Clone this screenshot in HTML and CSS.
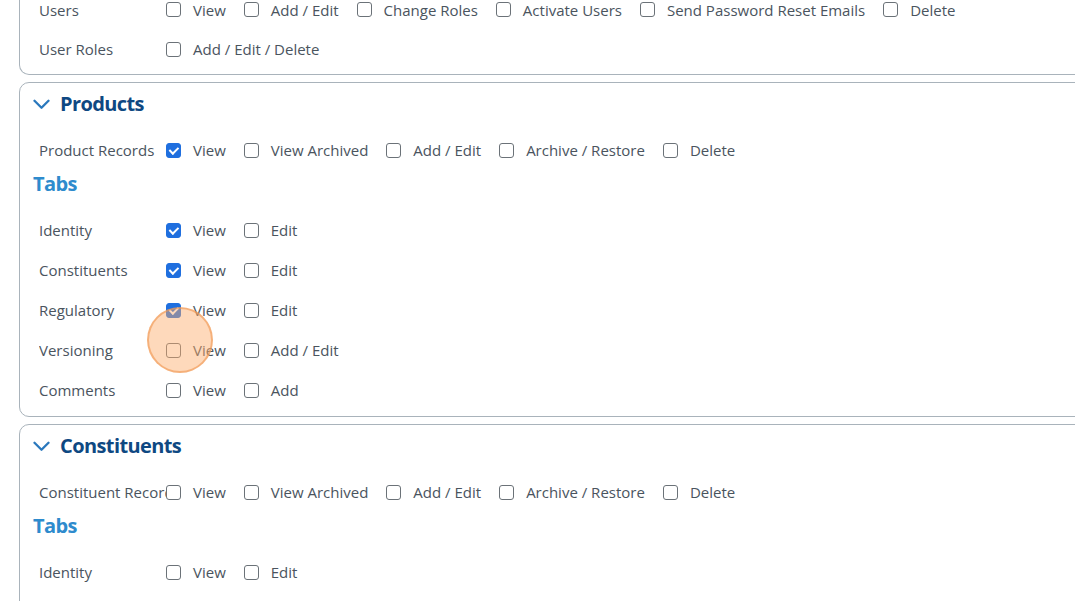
FILE: index.html
```html
<!DOCTYPE html>
<html>
<head>
<meta charset="utf-8">
<link rel="stylesheet" href="styles.css">
</head>
<body>
<div class="page">
  <section class="card card-top">
    <div class="row">
      <div class="label">Users</div>
      <div class="opt"><span class="cb"></span><span>View</span></div>
      <div class="opt"><span class="cb"></span><span>Add / Edit</span></div>
      <div class="opt"><span class="cb"></span><span>Change Roles</span></div>
      <div class="opt"><span class="cb"></span><span>Activate Users</span></div>
      <div class="opt"><span class="cb"></span><span>Send Password Reset Emails</span></div>
      <div class="opt"><span class="cb"></span><span>Delete</span></div>
    </div>
    <div class="row">
      <div class="label">User Roles</div>
      <div class="opt"><span class="cb"></span><span>Add / Edit / Delete</span></div>
    </div>
  </section>

  <section class="card">
    <h2 class="head"><svg class="chev" width="17" height="11" viewBox="0 0 17 11"><path d="M1.5 1.8 L8.5 8.8 L15.5 1.8" fill="none" stroke="#2a78bd" stroke-width="2.3" stroke-linecap="round" stroke-linejoin="round"/></svg><span>Products</span></h2>
    <div class="row">
      <div class="label">Product Records</div>
      <div class="opt"><span class="cb on"></span><span>View</span></div>
      <div class="opt"><span class="cb"></span><span>View Archived</span></div>
      <div class="opt"><span class="cb"></span><span>Add / Edit</span></div>
      <div class="opt"><span class="cb"></span><span>Archive / Restore</span></div>
      <div class="opt"><span class="cb"></span><span>Delete</span></div>
    </div>
    <h3 class="tabs">Tabs</h3>
    <div class="row">
      <div class="label">Identity</div>
      <div class="opt"><span class="cb on"></span><span>View</span></div>
      <div class="opt"><span class="cb"></span><span>Edit</span></div>
    </div>
    <div class="row">
      <div class="label">Constituents</div>
      <div class="opt"><span class="cb on"></span><span>View</span></div>
      <div class="opt"><span class="cb"></span><span>Edit</span></div>
    </div>
    <div class="row">
      <div class="label">Regulatory</div>
      <div class="opt"><span class="cb on"></span><span>View</span></div>
      <div class="opt"><span class="cb"></span><span>Edit</span></div>
    </div>
    <div class="row">
      <div class="label">Versioning</div>
      <div class="opt"><span class="cb"></span><span>View</span></div>
      <div class="opt"><span class="cb"></span><span>Add / Edit</span></div>
    </div>
    <div class="row">
      <div class="label">Comments</div>
      <div class="opt"><span class="cb"></span><span>View</span></div>
      <div class="opt"><span class="cb"></span><span>Add</span></div>
    </div>
  </section>

  <section class="card">
    <h2 class="head"><svg class="chev" width="17" height="11" viewBox="0 0 17 11"><path d="M1.5 1.8 L8.5 8.8 L15.5 1.8" fill="none" stroke="#2a78bd" stroke-width="2.3" stroke-linecap="round" stroke-linejoin="round"/></svg><span>Constituents</span></h2>
    <div class="row">
      <div class="label">Constituent Records</div>
      <div class="opt"><span class="cb"></span><span>View</span></div>
      <div class="opt"><span class="cb"></span><span>View Archived</span></div>
      <div class="opt"><span class="cb"></span><span>Add / Edit</span></div>
      <div class="opt"><span class="cb"></span><span>Archive / Restore</span></div>
      <div class="opt"><span class="cb"></span><span>Delete</span></div>
    </div>
    <h3 class="tabs">Tabs</h3>
    <div class="row">
      <div class="label">Identity</div>
      <div class="opt"><span class="cb"></span><span>View</span></div>
      <div class="opt"><span class="cb"></span><span>Edit</span></div>
    </div>
    <div class="row">
      <div class="label">Constituents</div>
      <div class="opt"><span class="cb"></span><span>View</span></div>
      <div class="opt"><span class="cb"></span><span>Edit</span></div>
    </div>
  </section>

  <div class="click"></div>
</div>
</body>
</html>
```

FILE: styles.css
```css
html, body {
  margin: 0;
  padding: 0;
  background: #ffffff;
  overflow: hidden;
}
body {
  font-family: "Open Sans", "Noto Sans", sans-serif;
  font-size: 15px;
  color: #4a545e;
}
.page {
  position: relative;
  margin-top: -10px;
  padding-left: 19px;
  width: 1200px;
}
.card {
  border: 1px solid #a9b3bb;
  border-radius: 10px;
  padding: 0 0 6px 19px;
  margin-bottom: 7px;
  background: #fff;
}
.card-top {
  border-top: none;
  border-top-left-radius: 0;
  border-top-right-radius: 0;
  padding-bottom: 5px;
}
.row {
  display: flex;
  align-items: center;
  height: 40px;
}
.card-top .row:first-child {
  height: 39px;
}
.label {
  width: 127px;
  flex: none;
  white-space: nowrap;
  overflow: hidden;
}
.opt {
  display: flex;
  align-items: center;
  gap: 12px;
  margin-right: 18px;
  white-space: nowrap;
}
.cb {
  width: 15px;
  height: 15px;
  box-sizing: border-box;
  border: 1.5px solid #6b7278;
  border-radius: 3px;
  flex: none;
  position: relative;
}
.cb.on {
  background: #1f6fdf;
  border-color: #1f6fdf;
}
.cb.on::after {
  content: "";
  position: absolute;
  left: 4px;
  top: 1px;
  width: 3.5px;
  height: 7px;
  border: solid #fff;
  border-width: 0 2px 2px 0;
  transform: rotate(45deg);
}
.head {
  display: flex;
  align-items: center;
  gap: 10px;
  margin: 0 0 0 -6px;
  padding: 6px 0 13px 0;
  height: 28px;
  font-size: 20px;
  font-weight: 700;
  color: #0e4882;
  letter-spacing: -0.6px;
}
.chev {
  flex: none;
  margin-top: 2px;
}
.tabs {
  margin: 0 0 0 -6px;
  padding: 0 0 12px 0;
  height: 28px;
  line-height: 28px;
  font-size: 20px;
  font-weight: 700;
  color: #2e8bcd;
  letter-spacing: -0.6px;
}
.click {
  position: absolute;
  left: 147px;
  top: 317px;
  width: 62px;
  height: 62px;
  border-radius: 50%;
  background: rgba(252, 170, 105, 0.45);
  border: 2px solid rgba(240, 150, 80, 0.6);
}
```
